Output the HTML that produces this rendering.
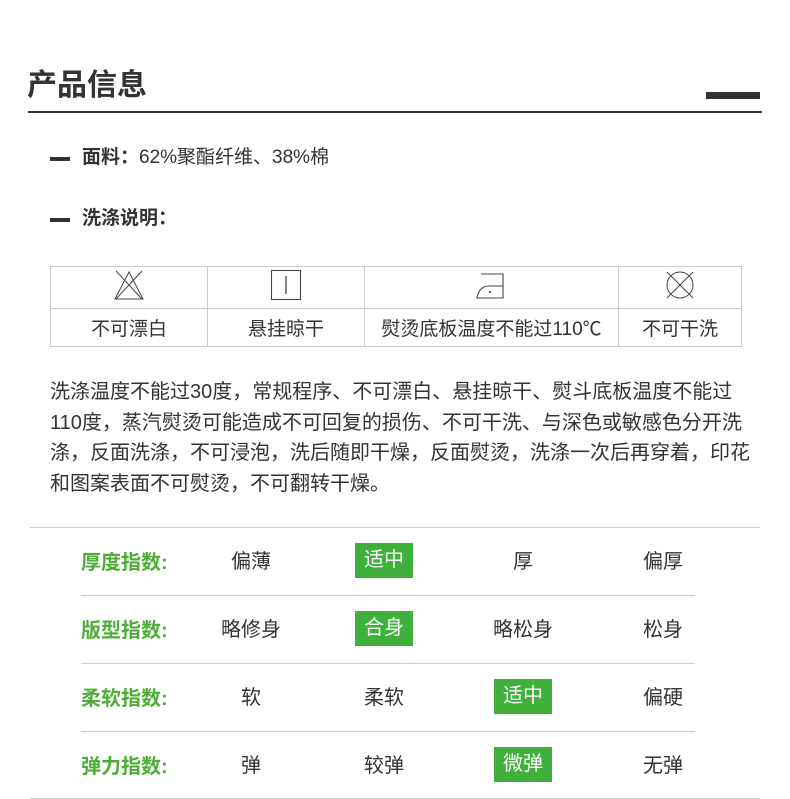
<!DOCTYPE html>
<html><head><meta charset="utf-8"><style>
*{margin:0;padding:0;box-sizing:border-box}
body{width:790px;height:799px;background:#fff;font-family:"Liberation Sans","Noto Sans CJK SC",sans-serif;color:#333;position:relative;overflow:hidden}
.abs{position:absolute;white-space:nowrap}
.title{left:27px;top:66px;font-size:30px;font-weight:bold;color:#333;line-height:40px}
.bar{left:706px;top:92px;width:54px;height:7px;background:#333}
.hr{left:28px;top:111px;width:734px;height:2px;background:#333}
.dash{width:20px;height:4px;background:#333}
.item{font-size:19px;line-height:24px}
table{position:absolute;left:50px;top:266px;border-collapse:collapse}
td{border:1px solid #ccc;text-align:center;font-size:19px;color:#333;padding:0}
tr.i td{height:42px}
tr.t td{height:38px}
.para{left:50px;top:377px;font-size:20px;line-height:30.5px;color:#333}
.line{height:1px;background:#ccc}
.lab{font-size:20px;font-weight:bold;color:#4cae36;left:81px}
.opt{font-size:20px;text-align:center;width:120px;margin-left:-60px;line-height:35px}
.sel{background:#3fb03a;color:#fff;width:58px;margin-left:-29px}
</style></head><body>
<div class="abs title">产品信息</div>
<div class="abs bar"></div>
<div class="abs hr"></div>
<div class="abs dash" style="left:50px;top:157px"></div>
<div class="abs item" style="left:82px;top:146px"><b>面料：</b>62%聚酯纤维、38%棉</div>
<div class="abs dash" style="left:50px;top:218px"></div>
<div class="abs item" style="left:82px;top:207px"><b>洗涤说明：</b></div>
<table>
<tr class="i">
<td style="width:157px"><svg width="34" height="32" viewBox="0 0 34 32"><path d="M17 3 L3 30 H31 Z M4 2 L30 30 M30 2 L4 30" stroke="#444" stroke-width="1" fill="none"/></svg></td>
<td style="width:157px"><svg width="32" height="32"><rect x="1.5" y="1.5" width="29" height="29" stroke="#444" stroke-width="1.1" fill="none"/><path d="M16 7 V25" stroke="#444" stroke-width="1.3"/></svg></td>
<td style="width:254px"><svg width="34" height="30" viewBox="0 0 34 30"><path d="M6 4 H28 V28 H2 C3 20 8 16 14 16 H28" stroke="#444" stroke-width="1.1" fill="none"/><circle cx="15" cy="22" r="1.1" fill="#444"/></svg></td>
<td style="width:123px"><svg width="32" height="32"><circle cx="16" cy="16" r="13" stroke="#444" stroke-width="1" fill="none"/><path d="M3 3 L29 29 M29 3 L3 29" stroke="#444" stroke-width="1"/></svg></td>
</tr>
<tr class="t"><td>不可漂白</td><td>悬挂晾干</td><td>熨烫底板温度不能过110℃</td><td>不可干洗</td></tr>
</table>
<div class="abs para">洗涤温度不能过30度，常规程序、不可漂白、悬挂晾干、熨斗底板温度不能过<br>110度，蒸汽熨烫可能造成不可回复的损伤、不可干洗、与深色或敏感色分开洗<br>涤，反面洗涤，不可浸泡，洗后随即干燥，反面熨烫，洗涤一次后再穿着，印花<br>和图案表面不可熨烫，不可翻转干燥。</div>
<div class="abs line" style="left:30px;top:527px;width:730px"></div>
<div class="abs line" style="left:81px;top:595px;width:614px"></div>
<div class="abs line" style="left:81px;top:663px;width:614px"></div>
<div class="abs line" style="left:81px;top:731px;width:614px"></div>
<div class="abs line" style="left:30px;top:798px;width:730px"></div>

<div class="abs lab" style="top:546px">厚度指数:</div>
<div class="abs opt" style="left:251px;top:545px">偏薄</div>
<div class="abs opt sel" style="left:384px;top:543px">适中</div>
<div class="abs opt" style="left:523px;top:545px">厚</div>
<div class="abs opt" style="left:663px;top:545px">偏厚</div>

<div class="abs lab" style="top:614px">版型指数:</div>
<div class="abs opt" style="left:251px;top:613px">略修身</div>
<div class="abs opt sel" style="left:384px;top:611px">合身</div>
<div class="abs opt" style="left:523px;top:613px">略松身</div>
<div class="abs opt" style="left:663px;top:613px">松身</div>

<div class="abs lab" style="top:682px">柔软指数:</div>
<div class="abs opt" style="left:251px;top:681px">软</div>
<div class="abs opt" style="left:384px;top:681px">柔软</div>
<div class="abs opt sel" style="left:523px;top:679px">适中</div>
<div class="abs opt" style="left:663px;top:681px">偏硬</div>

<div class="abs lab" style="top:750px">弹力指数:</div>
<div class="abs opt" style="left:251px;top:749px">弹</div>
<div class="abs opt" style="left:384px;top:749px">较弹</div>
<div class="abs opt sel" style="left:523px;top:747px">微弹</div>
<div class="abs opt" style="left:663px;top:749px">无弹</div>
</body></html>
